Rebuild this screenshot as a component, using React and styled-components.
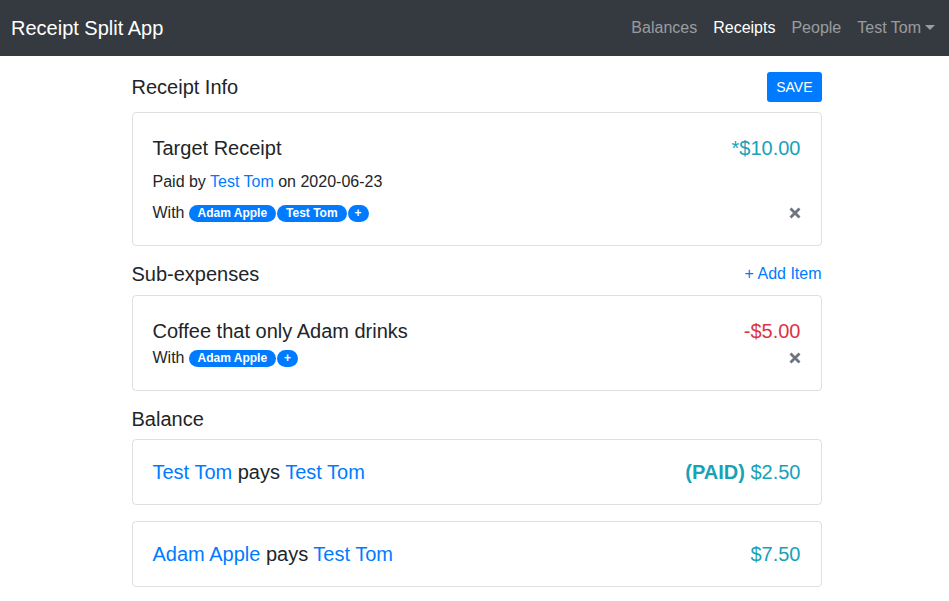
import React from 'react'
import styled, {createGlobalStyle} from 'styled-components'

const Global = createGlobalStyle`
  body {
    margin: 0;
    background: #fff;
    font-family: "Liberation Sans", Arial, sans-serif;
    color: #212529;
    font-size: 16px;
    line-height: 1.5;
  }
`

const Times = () => (
  <svg width="12" height="12" viewBox="0 0 12 12">
    <path d="M1.5 1.5 L10.5 10.5 M10.5 1.5 L1.5 10.5" stroke="#6c757d" strokeWidth="2.8" strokeLinecap="butt" />
  </svg>
)

const Badges = ({names}) => (
  <BadgeRow>
    {names.map(n => <Badge key={n}>{n}</Badge>)}
    <Badge $round>+</Badge>
  </BadgeRow>
)

const App = () => {
  return (
    <>
      <Global />
      <Nav>
        <Brand>Receipt Split App</Brand>
        <Links>
          <NavLink>Balances</NavLink>
          <NavLink $active>Receipts</NavLink>
          <NavLink>People</NavLink>
          <NavLink $caret>Test Tom</NavLink>
        </Links>
      </Nav>
      <Container>
        <SectionHead $mb={10}>
          <h2>Receipt Info</h2>
          <SaveButton>SAVE</SaveButton>
        </SectionHead>
        <Card>
          <Row>
            <Title $tall>Target Receipt</Title>
            <Amount $color="#17a2b8">*$10.00</Amount>
          </Row>
          <Meta>Paid by <Link>Test Tom</Link> on 2020-06-23</Meta>
          <Row $gapTop={7}>
            <With>With <Badges names={['Adam Apple', 'Test Tom']} /></With>
            <Times />
          </Row>
        </Card>

        <SectionHead>
          <h2>Sub-expenses</h2>
          <AddLink>+ Add Item</AddLink>
        </SectionHead>
        <Card>
          <Row>
            <Title $tall>Coffee that only Adam drinks</Title>
            <Amount $color="#dc3545">-$5.00</Amount>
          </Row>
          <Row>
            <With>With <Badges names={['Adam Apple']} /></With>
            <Times />
          </Row>
        </Card>

        <SectionHead $mb={8}>
          <h2>Balance</h2>
        </SectionHead>
        <BalanceList>
          <Card>
            <Row>
              <Title><Link>Test Tom</Link> pays <Link>Test Tom</Link></Title>
              <Amount $color="#17a2b8"><b>(PAID)</b> $2.50</Amount>
            </Row>
          </Card>
          <Card>
            <Row>
              <Title><Link>Adam Apple</Link> pays <Link>Test Tom</Link></Title>
              <Amount $color="#17a2b8">$7.50</Amount>
            </Row>
          </Card>
        </BalanceList>
      </Container>
    </>
  )
}

export default App

const Nav = styled.nav`
  height: 56px;
  background: #343a40;
  display: flex;
  align-items: center;
  justify-content: space-between;
  padding: 0 6px 0 11px;
`
const Brand = styled.div`
  color: #fff;
  font-size: 20px;
`
const Links = styled.div`
  display: flex;
  align-items: center;
`
const NavLink = styled.span`
  padding: 0 8px;
  color: ${p => (p.$active ? '#fff' : 'rgba(255,255,255,.5)')};
  font-size: 16px;
  ${p => p.$caret && `
    &::after {
      content: '';
      display: inline-block;
      margin-left: 4px;
      vertical-align: 3px;
      border-top: 5px solid;
      border-left: 5px solid transparent;
      border-right: 5px solid transparent;
    }
  `}
`
const Container = styled.main`
  width: 690px;
  margin: 0 auto;
  position: relative;
  left: 2px;
  padding-bottom: 15px;
`
const SectionHead = styled.div`
  display: flex;
  align-items: center;
  justify-content: space-between;
  margin: 16px 0 ${p => p.$mb || 9}px;
  h2 {
    margin: 0;
    font-size: 20px;
    font-weight: 400;
    line-height: 24px;
  }
`
const SaveButton = styled.button`
  height: 30px;
  padding: 0 9px;
  border: none;
  border-radius: 3px;
  background: #007bff;
  color: #fff;
  font-family: inherit;
  font-size: 14px;
`
const AddLink = styled.span`
  color: #007bff;
  font-size: 16px;
`
const Card = styled.div`
  border: 1px solid rgba(0,0,0,.125);
  border-radius: 4px;
  padding: 20px;
`
const BalanceList = styled.div`
  display: flex;
  flex-direction: column;
  gap: 16px;
`
const Row = styled.div`
  display: flex;
  align-items: center;
  justify-content: space-between;
  margin-top: ${p => p.$gapTop || 0}px;
`
const Title = styled.div`
  font-size: 20px;
  line-height: ${p => (p.$tall ? '30px' : '24px')};
`
const Amount = styled.div`
  font-size: 20px;
  line-height: 24px;
  color: ${p => p.$color};
  b { font-weight: 700; }
`
const Meta = styled.div`
  margin-top: 7px;
  font-size: 16px;
  line-height: 24px;
`
const Link = styled.span`
  color: #007bff;
`
const With = styled.div`
  display: flex;
  align-items: center;
  gap: 4px;
  line-height: 24px;
`
const BadgeRow = styled.div`
  display: flex;
  align-items: center;
`
const Badge = styled.span`
  display: inline-flex;
  align-items: center;
  justify-content: center;
  height: 17px;
  min-width: 21px;
  padding: 0 ${p => (p.$round ? '0' : '9px')};
  margin-right: 1px;
  border-radius: 9px;
  background: #007bff;
  color: #fff;
  font-size: 12px;
  font-weight: 700;
  line-height: 1;
`
